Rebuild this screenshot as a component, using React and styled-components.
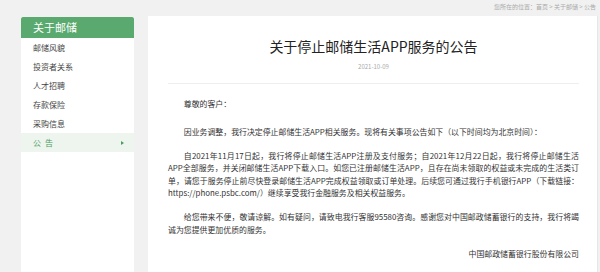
import React from "react";
import styled, { createGlobalStyle } from "styled-components";

const Global = createGlobalStyle`
  html, body { margin: 0; padding: 0; background: #f1f1f1; }
  body { font-family: "Noto Sans CJK SC", "Noto Sans", sans-serif; color: #333; }
  * { box-sizing: border-box; }
`;

const Page = styled.div`
  width: 600px;
  height: 272px;
  overflow: hidden;
  display: flex;
  flex-direction: column;
`;

const Crumbs = styled.div`
  height: 16px;
  display: flex;
  justify-content: flex-end;
  align-items: center;
  padding: 0 4px 4px 0;
  font-size: 6px;
  color: #aaa;
  white-space: nowrap;
`;

const Body = styled.div`
  flex: 1;
  display: flex;
  gap: 14px;
  padding-left: 21px;
  padding-right: 2px;
`;

const Side = styled.nav`
  width: 113px;
  background: #fff;
  display: flex;
  flex-direction: column;
  margin-top: 1px;
`;

const SideHead = styled.div`
  height: 21px;
  background: #5aaa70;
  color: #fff;
  font-size: 11px;
  line-height: 21px;
  padding-left: 12px;
  border-radius: 2px 2px 0 0;
`;

const SideItem = styled.div`
  height: 19px;
  display: flex;
  align-items: center;
  justify-content: space-between;
  padding: 0 10px 0 12px;
  font-size: 8px;
  color: ${(p) => (p.$active ? "#4c9c5e" : "#444")};
  background: ${(p) => (p.$active ? "#eef5ee" : "transparent")};
  letter-spacing: ${(p) => (p.$active ? "4px" : "0")};
`;

const Arrow = styled.span`
  width: 0;
  height: 0;
  border-top: 2px solid transparent;
  border-bottom: 2px solid transparent;
  border-left: 3px solid #4c9c5e;
`;

const Main = styled.main`
  flex: 1;
  background: #fff;
  padding: 20px 18px 0 20px;
  border-right: 1px solid #e6e6e6;
`;

const Title = styled.h1`
  margin: 0;
  font-size: 14px;
  font-weight: 400;
  line-height: 20px;
  text-align: center;
  color: #222;
`;

const DateLine = styled.div`
  margin-top: 6px;
  font-size: 6px;
  line-height: 10px;
  text-align: center;
  color: #aaa;
`;

const Rule = styled.hr`
  margin: 11px 0 0 0;
  border: 0;
  border-top: 1px solid #eee;
`;

const Article = styled.div`
  padding-top: 14px;
  font-size: 7.9px;
  line-height: 12.4px;
  color: #333;
`;

const P = styled.p`
  margin: 0 0 ${(p) => p.$gap || 11.6}px 0;
  text-indent: 2em;
  text-align: ${(p) => (p.$right ? "right" : "justify")};
  ${(p) => (p.$right ? "text-indent: 0;" : "")}
`;

const items = ["邮储风貌", "投资者关系", "人才招聘", "存款保险", "采购信息"];

export default function App() {
  return (
    <Page>
      <Global />
      <Crumbs>您所在的位置：首页 &gt; 关于邮储 &gt; 公告</Crumbs>
      <Body>
        <Side>
          <SideHead>关于邮储</SideHead>
          {items.map((t) => (
            <SideItem key={t}>{t}</SideItem>
          ))}
          <SideItem $active>
            公告
            <Arrow />
          </SideItem>
        </Side>
        <Main>
          <Title>关于停止邮储生活APP服务的公告</Title>
          <DateLine>2021-10-09</DateLine>
          <Rule />
          <Article>
            <P $gap={15.6}>尊敬的客户：</P>
            <P>因业务调整，我行决定停止邮储生活APP相关服务。现将有关事项公告如下（以下时间均为北京时间）：</P>
            <P>
              自2021年11月17日起，我行将停止邮储生活APP注册及支付服务；自2021年12月22日起，我行将停止邮储生活APP全部服务，并关闭邮储生活APP下载入口。如您已注册邮储生活APP，且存在尚未领取的权益或未完成的生活类订单，请您于服务停止前尽快登录邮储生活APP完成权益领取或订单处理。后续您可通过我行手机银行APP（下载链接：https://phone.psbc.com/）继续享受我行金融服务及相关权益服务。
            </P>
            <P>
              给您带来不便，敬请谅解。如有疑问，请致电我行客服95580咨询。感谢您对中国邮政储蓄银行的支持，我行将竭诚为您提供更加优质的服务。
            </P>
            <P $right>中国邮政储蓄银行股份有限公司</P>
          </Article>
        </Main>
      </Body>
    </Page>
  );
}
